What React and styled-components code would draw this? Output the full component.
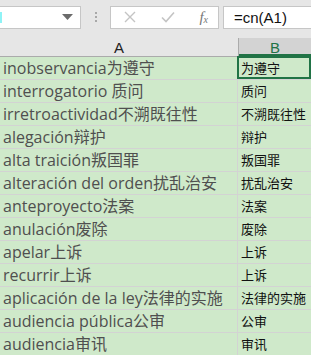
import styled, { createGlobalStyle } from 'styled-components';

const GlobalStyle = createGlobalStyle`
  html, body {
    margin: 0;
    padding: 0;
    background: #e6e6e6;
    overflow: hidden;
  }
`;

const rows = [
  ['inobservancia为遵守', '为遵守'],
  ['interrogatorio 质问', '质问'],
  ['irretroactividad不溯既往性', '不溯既往性'],
  ['alegación辩护', '辩护'],
  ['alta traición叛国罪', '叛国罪'],
  ['alteración del orden扰乱治安', '扰乱治安'],
  ['anteproyecto法案', '法案'],
  ['anulación废除', '废除'],
  ['apelar上诉', '上诉'],
  ['recurrir上诉', '上诉'],
  ['aplicación de la ley法律的实施', '法律的实施'],
  ['audiencia pública公审', '公审'],
  ['audiencia审讯', '审讯'],
];

const App = () => {
  return (
    <Sheet>
      <GlobalStyle />
      <Toolbar>
        <NameBox>
          <Caret />
          <svg width="11" height="6" viewBox="0 0 11 6">
            <path d="M0 0h11L5.5 6z" fill="#6b6b6b" />
          </svg>
        </NameBox>
        <Grip>
          <span />
          <span />
          <span />
        </Grip>
        <FxButtons>
          <svg width="12" height="12" viewBox="0 0 12 12">
            <path d="M1 1l10 10M11 1L1 11" stroke="#c4c4c4" strokeWidth="1.4" />
          </svg>
          <svg width="14" height="12" viewBox="0 0 14 12">
            <path d="M1 6.5l4 4L13 1.5" stroke="#c4c4c4" strokeWidth="1.6" fill="none" />
          </svg>
          <FxLabel>
            f<sub>x</sub>
          </FxLabel>
        </FxButtons>
        <FormulaInput>=cn(A1)</FormulaInput>
      </Toolbar>
      <HeaderRow>
        <ColHeader>A</ColHeader>
        <ColHeader selected>B</ColHeader>
      </HeaderRow>
      {rows.map(([a, b], i) => (
        <Row key={i}>
          <CellA>{a}</CellA>
          <CellB active={i === 0}>{b}</CellB>
        </Row>
      ))}
    </Sheet>
  );
};

export default App;

const Sheet = styled.div`
  width: 311px;
  height: 355px;
  overflow: hidden;
  background: #e6e6e6;
  font-family: 'Open Sans', 'Noto Sans CJK SC', sans-serif;
`;

const Toolbar = styled.div`
  display: flex;
  align-items: center;
  height: 38px;
  padding-bottom: 0;
  box-sizing: border-box;
  padding-top: 0;
`;

const NameBox = styled.div`
  display: flex;
  align-items: center;
  justify-content: space-between;
  box-sizing: border-box;
  width: 81px;
  height: 23px;
  margin-top: -4px;
  background: #fff;
  border: 1px solid #c6c6c6;
  border-left: none;
  padding-right: 7px;
`;

const Caret = styled.span`
  width: 2px;
  height: 11px;
  background: #8ff3f6;
`;

const Grip = styled.div`
  display: flex;
  flex-direction: column;
  gap: 2px;
  margin: -4px 13px 0 14px;
  span {
    width: 2px;
    height: 2px;
    background: #a8a8a8;
  }
`;

const FxButtons = styled.div`
  display: flex;
  align-items: center;
  justify-content: space-between;
  box-sizing: border-box;
  width: 109px;
  height: 23px;
  margin-top: -4px;
  padding: 0 10px 0 13px;
  background: #fff;
  border: 1px solid #c6c6c6;
`;

const FxLabel = styled.span`
  font-family: 'Liberation Serif', serif;
  font-style: italic;
  font-size: 15px;
  color: #777;
  line-height: 1;
  sub {
    font-size: 10px;
    vertical-align: -1px;
  }
`;

const FormulaInput = styled.div`
  flex: 1;
  box-sizing: border-box;
  height: 23px;
  margin: -4px 0 0 4px;
  padding-left: 10px;
  background: #fff;
  border: 1px solid #c6c6c6;
  border-right: none;
  font-family: 'Liberation Sans', sans-serif;
  font-size: 15px;
  line-height: 21px;
  color: #111;
`;

const HeaderRow = styled.div`
  display: grid;
  grid-template-columns: 238px 1fr;
  height: 18px;
  border-bottom: 1px solid #ababab;
`;

const ColHeader = styled.div`
  display: flex;
  align-items: center;
  justify-content: center;
  font-family: 'Liberation Sans', sans-serif;
  font-size: 15px;
  color: ${(p) => (p.selected ? '#217346' : '#222')};
  background: ${(p) => (p.selected ? '#d3d3d3' : '#e6e6e6')};
  border-left: ${(p) => (p.selected ? '1px solid #ababab' : 'none')};
  box-shadow: ${(p) => (p.selected ? 'inset 0 -2px 0 #217346' : 'none')};
`;

const Row = styled.div`
  display: grid;
  grid-template-columns: 238px 1fr;
  height: 23px;
  box-sizing: border-box;
  background: #cfe9ca;
  border-bottom: 1px solid #d3d3d3;
`;

const CellA = styled.div`
  padding-left: 3px;
  font-size: 16px;
  line-height: 22px;
  color: #4f4f4f;
  white-space: nowrap;
  overflow: hidden;
  border-right: 1px solid #d3d3d3;
`;

const CellB = styled.div`
  position: relative;
  padding-left: 3px;
  font-family: 'Noto Sans CJK SC', sans-serif;
  font-size: 13px;
  line-height: 22px;
  color: #111;
  white-space: nowrap;
  overflow: hidden;
  ${(p) =>
    p.active &&
    `
    box-shadow: inset 0 0 0 2px #217346;
    margin: -1px 0 0 -1px;
    padding-left: 4px;
    line-height: 24px;
  `}
`;
